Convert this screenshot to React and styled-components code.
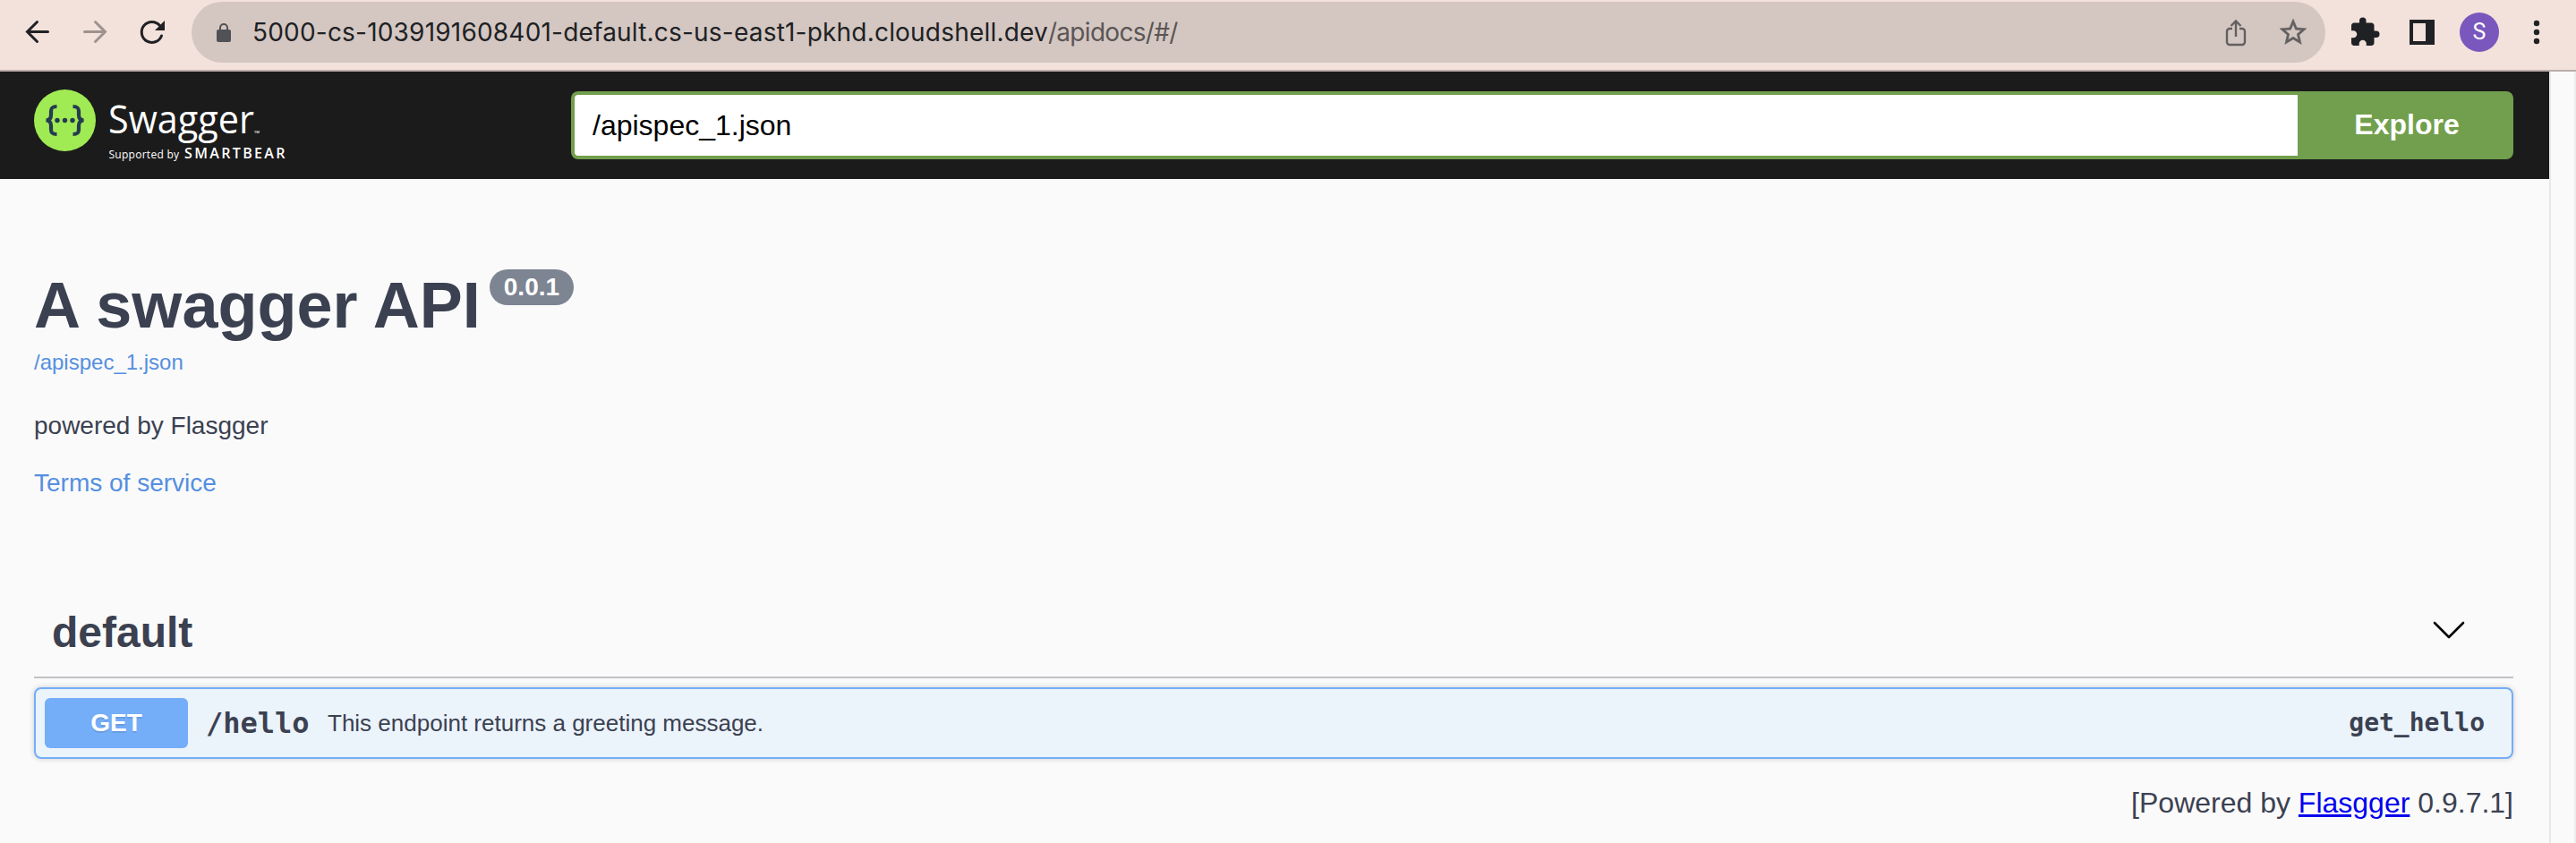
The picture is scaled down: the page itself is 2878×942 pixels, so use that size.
import React from "react";
import styled, { createGlobalStyle } from "styled-components";

const Global = createGlobalStyle`
  * { box-sizing: border-box; }
  body { margin: 0; background: #fafafa; }
`;

const sans = `"Liberation Sans", Arial, sans-serif`;
const mono = `"DejaVu Sans Mono", monospace`;

const Page = styled.div`
  display: flex;
  flex-direction: column;
  height: 942px;
  overflow: hidden;
  background: #fafafa;
  color: #3b4151;
  font-family: ${sans};
`;

const BrowserBar = styled.header`
  display: flex;
  height: 80px;
  flex: none;
  padding: 2px 20px 0 24px;
  background: #f3e2db;
  border-bottom: 2px solid #bcaeab;
`;

const Icon = styled.svg`
  display: block;
  flex: none;
  width: ${(p) => p.$w || 36}px;
  height: ${(p) => p.$h || 36}px;
  margin-left: ${(p) => p.$ml || 0}px;
  margin-bottom: ${(p) => p.$mb || 0}px;
`;

const NavIcons = styled.div`
  display: flex;
  align-items: center;
  width: 190px;
  height: 68px;
`;

const Omnibox = styled.div`
  display: flex;
  align-items: center;
  width: 2384px;
  height: 68px;
  padding: 0 18px 0 24px;
  border-radius: 34px;
  background: #d4c7c2;
`;

const Url = styled.div`
  flex: 1;
  margin-left: 20px;
  font: 28px/36px Inter, sans-serif;
  letter-spacing: 0.2px;
  color: #202124;
  white-space: nowrap;
  span {
    color: #5b5655;
    letter-spacing: -0.7px;
  }
`;

const Actions = styled.div`
  display: flex;
  align-items: center;
  height: 68px;
  margin-left: 26px;
`;

const Avatar = styled.div`
  display: flex;
  align-items: center;
  justify-content: center;
  width: 44px;
  height: 44px;
  margin-left: 24px;
  border-radius: 50%;
  background: #7957bd;
  color: #fff;
  font: 25px/44px Roboto, sans-serif;
`;

const Viewport = styled.div`
  display: flex;
  flex: 1;
`;

const Content = styled.div`
  width: 2848px;
`;

const ScrollTrack = styled.div`
  width: 30px;
  border-left: 2px solid #e8e8e8;
  border-right: 2px solid #ededed;
  background: #fafafa;
`;

const TopBar = styled.div`
  display: flex;
  align-items: center;
  justify-content: space-between;
  height: 120px;
  padding: 0 40px 0 38px;
  background: #1b1b1b;
`;

const SpecForm = styled.form`
  display: flex;
  width: 2170px;
  height: 76px;
`;

const SpecInput = styled.div`
  flex: 1;
  padding: 0 20px;
  border: 4px solid #719f4d;
  border-right: 0;
  border-radius: 8px 0 0 8px;
  background: #fff;
  color: #000;
  font-size: 32px;
  line-height: 69px;
`;

const ExploreButton = styled.button`
  width: 241px;
  padding: 0 0 1px 3px;
  border: 0;
  border-radius: 0 8px 8px 0;
  background: #719f4d;
  color: #fff;
  font: bold 32px ${sans};
`;

const Info = styled.section`
  display: flex;
  flex-direction: column;
  align-items: flex-start;
  height: 468px;
  padding: 100px 38px 0;
`;

const Title = styled.h1`
  display: flex;
  align-items: flex-start;
  margin: 0;
  font-size: 72px;
  line-height: 82px;
`;

const Version = styled.span`
  height: 40px;
  margin: 1px 0 0 10px;
  padding: 0 16px;
  border-radius: 20px;
  background: #7d8492;
  color: #fff;
  font-size: 28px;
  line-height: 40px;
`;

const Link = styled.a`
  color: #558fe0;
  font-size: ${(p) => p.$size}px;
  line-height: 32px;
  margin-top: ${(p) => p.$mt}px;
`;

const Description = styled.p`
  margin: 39px 0 0;
  font-size: 28px;
  line-height: 32px;
`;

const TagHeader = styled.div`
  display: flex;
  align-items: center;
  justify-content: space-between;
  height: 90px;
  margin: 0 40px 10px 38px;
  padding: 0 52px 11px 20px;
  border-bottom: 2px solid rgba(59, 65, 81, 0.3);
  font-size: 48px;
  font-weight: bold;
`;

const Operation = styled.div`
  display: flex;
  align-items: center;
  height: 80px;
  margin: 0 40px 0 38px;
  padding: 0 30px 0 10px;
  border: 2px solid #74adf8;
  border-radius: 8px;
  background: #ebf3fb;
  box-shadow: 0 0 6px rgba(0, 0, 0, 0.19);
`;

const Method = styled.span`
  width: 160px;
  height: 56px;
  border-radius: 6px;
  background: #74adf8;
  color: #fff;
  font-size: 28px;
  font-weight: bold;
  line-height: 56px;
  text-align: center;
  text-shadow: 0 2px 0 rgba(0, 0, 0, 0.1);
`;

const Path = styled.span`
  width: 136px;
  margin-left: 20px;
  font: bold 32px/40px ${mono};
`;

const Summary = styled.span`
  flex: 1;
  font-size: 26px;
  line-height: 32px;
`;

const OperationId = styled.span`
  font: bold 28px/36px ${mono};
`;

const Footer = styled.footer`
  padding: 31px 40px 0;
  font-size: 32px;
  line-height: 36px;
  text-align: right;
  a { color: #0000ee; text-decoration: underline; }
`;

const SwaggerLogo = () => (
  <Icon $w={290} $h={100} viewBox="38 90 290 100">
    <circle cx="72.5" cy="134.5" r="34.5" fill="#a0eb54" />
    <g fill="none" stroke="#253b50" strokeWidth="4.2">
      <path d="M63.5 119c-5 0-6.500 1.500-6.500 5.500v4c0 3.500-1.500 5.800-5.500 6 4 .2 5.500 2.500 5.500 6v4c0 4 1.500 5.500 6.500 5.500" />
      <path d="M81.500 119c5 0 6.500 1.500 6.500 5.500v4c0 3.500 1.500 5.800 5.500 6-4 .2-5.500 2.500-5.500 6v4c0 4-1.500 5.500-6.500 5.500" />
    </g>
    <g fill="#253b50">
      <circle cx="64" cy="134.500" r="2.700" />
      <circle cx="72.500" cy="134.500" r="2.700" />
      <circle cx="81" cy="134.500" r="2.700" />
    </g>
    <g fill="#fff" fontFamily="'Open Sans', 'Noto Sans', sans-serif">
      <text x="121" y="148.500" fontSize="43" textLength="163" lengthAdjust="spacingAndGlyphs">Swagger</text>
      <text x="284" y="149" fontSize="4" fontWeight="600">TM</text>
      <text x="121.500" y="177" fontSize="12" textLength="78.500">Supported by</text>
      <text x="206" y="177" fontSize="16" fontWeight="600" textLength="112.500">SMARTBEAR</text>
    </g>
  </Icon>
);

const App = () => (
  <Page>
    <Global />
    <BrowserBar>
      <NavIcons>
        <Icon viewBox="24 18 36 36" fill="none" stroke="#202124" strokeWidth="3" strokeLinecap="round">
          <path d="M53.500 35.500H31M41.500 24.500 30.500 35.500 41.500 46.500" />
        </Icon>
        <Icon $ml={28} viewBox="88 18 36 36" fill="none" stroke="#9d928f" strokeWidth="3" strokeLinecap="round">
          <path d="M94.500 35.500H117M106.500 24.500 117.500 35.500 106.500 46.500" />
        </Icon>
        <Icon $ml={28} viewBox="152 18 36 36">
          <path d="M178.500 28.500A11.500 11.500 0 1 0 180.500 40" fill="none" stroke="#202124" strokeWidth="3" strokeLinecap="round" />
          <path d="M184 23V34H173Z" fill="#202124" />
        </Icon>
      </NavIcons>
      <Omnibox>
        <Icon $w={24} $h={32} viewBox="238 20 24 32">
          <rect x="242" y="33" width="16" height="14" rx="2" fill="#505256" />
          <path d="M246 34v-3a4 4 0 0 1 8 0v3" fill="none" stroke="#505256" strokeWidth="2" />
        </Icon>
        <Url>5000-cs-1039191608401-default.cs-us-east1-pkhd.cloudshell.dev<span>/apidocs/#/</span></Url>
        <Icon viewBox="2480 18 36 36" fill="none" stroke="#626060" strokeWidth="2.400">
          <path d="M2494 32h-3a3 3 0 0 0-3 3v12a3 3 0 0 0 3 3h14a3 3 0 0 0 3-3V35a3 3 0 0 0-3-3h-3M2498 41V24M2492.500 29l5.500-5.500 5.500 5.500" />
        </Icon>
        <Icon $ml={28} viewBox="0 0 24 24" fill="#626060" stroke="#626060" strokeWidth="0.300">
          <path d="M22 9.240l-7.190-.62L12 2 9.190 8.630 2 9.240l5.460 4.730L5.820 21 12 17.270 18.180 21l-1.630-7.030L22 9.240zM12 15.400l-3.760 2.270 1-4.280-3.320-2.880 4.380-.38L12 6.100l1.710 4.040 4.380.38-3.320 2.880 1 4.280L12 15.400z" />
        </Icon>
      </Omnibox>
      <Actions>
        <Icon viewBox="0 0 24 24" fill="#202124">
          <path d="M20.500 11H19V7c0-1.100-.9-2-2-2h-4V3.500a2.500 2.500 0 0 0-5 0V5H4c-1.100 0-1.990.9-1.990 2v3.800H3.500c1.490 0 2.700 1.210 2.700 2.700s-1.210 2.700-2.700 2.700H2V20c0 1.100.9 2 2 2h3.800v-1.500c0-1.490 1.210-2.700 2.700-2.700s2.700 1.210 2.700 2.700V22H17c1.100 0 2-.9 2-2v-4h1.500a2.500 2.500 0 0 0 0-5z" />
        </Icon>
        <Icon $ml={28} viewBox="2688 18 36 36">
          <path fillRule="evenodd" d="M2692 22h28v28h-28zM2696 26v20h14v-20z" fill="#202124" />
        </Icon>
        <Avatar>S</Avatar>
        <Icon $ml={24} viewBox="0 0 36 36" fill="#202124">
          <circle cx="18" cy="8" r="3.200" />
          <circle cx="18" cy="18" r="3.200" />
          <circle cx="18" cy="28" r="3.200" />
        </Icon>
      </Actions>
    </BrowserBar>
    <Viewport>
      <Content>
        <TopBar>
          <SwaggerLogo />
          <SpecForm>
            <SpecInput>/apispec_1.json</SpecInput>
            <ExploreButton type="button">Explore</ExploreButton>
          </SpecForm>
        </TopBar>
        <Info>
          <Title>
            A swagger API
            <Version>0.0.1</Version>
          </Title>
          <Link $size={24} $mt={7}>/apispec_1.json</Link>
          <Description>powered by Flasgger</Description>
          <Link $size={28} $mt={32}>Terms of service</Link>
        </Info>
        <TagHeader>
          default
          <Icon $w={40} $h={24} $mb={5} viewBox="0 0 40 24" fill="none" stroke="#000" strokeWidth="2.600" strokeLinecap="round" strokeLinejoin="round">
            <path d="M4 4 20 20 36 4" />
          </Icon>
        </TagHeader>
        <Operation>
          <Method>GET</Method>
          <Path>/hello</Path>
          <Summary>This endpoint returns a greeting message.</Summary>
          <OperationId>get_hello</OperationId>
        </Operation>
        <Footer>
          [Powered by <a>Flasgger</a> 0.9.7.1]
        </Footer>
      </Content>
      <ScrollTrack />
    </Viewport>
  </Page>
);

export default App;
